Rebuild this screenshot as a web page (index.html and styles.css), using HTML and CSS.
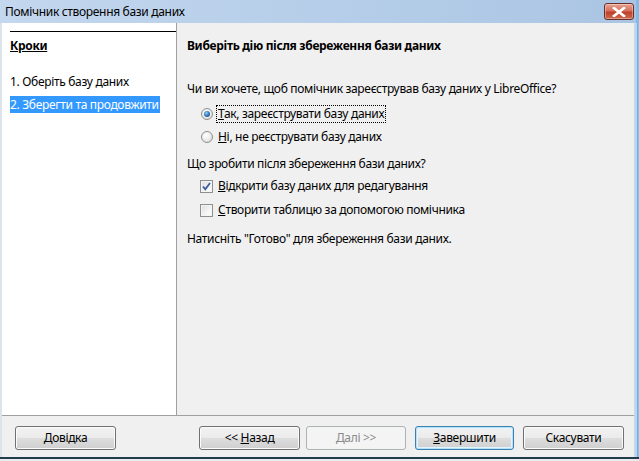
FILE: index.html
```html
<!DOCTYPE html>
<html lang="uk">
<head>
<meta charset="utf-8">
<title>Помічник створення бази даних</title>
<link rel="stylesheet" href="styles.css">
</head>
<body>
<div class="window">
  <div class="titlebar">
    <span class="title">Помічник створення бази даних</span>
    <div class="close">
      <svg width="14" height="10" viewBox="0 0 14 10"><path d="M2 1 L12 9 M12 1 L2 9" stroke="#ffffff" stroke-width="2.6" stroke-linecap="square"/></svg>
    </div>
  </div>
  <div class="frame">
    <div class="client">
      <div class="main">
        <aside class="steps">
          <div class="rule"></div>
          <div class="steps-title">Кроки</div>
          <ul class="step-list">
            <li class="step">1. Оберіть базу даних</li>
            <li class="step current">2. Зберегти та продовжити</li>
          </ul>
        </aside>
        <section class="page">
          <h1 class="page-title">Виберіть дію після збереження бази даних</h1>
          <p class="question q1">Чи ви хочете, щоб помічник зареєстрував базу даних у LibreOffice?</p>
          <div class="option r1"><span class="radio checked"></span><span class="label focus"><u>Т</u>ак, зареєструвати базу даних</span></div>
          <div class="option r2"><span class="radio"></span><span class="label"><u>Н</u>і, не реєструвати базу даних</span></div>
          <p class="question q2">Що зробити після збереження бази даних?</p>
          <div class="option c1"><span class="check checked"><svg width="11" height="11" viewBox="0 0 11 11"><path d="M2 5.5 L4.3 8.3 L9 2" fill="none" stroke="#3b5c9a" stroke-width="1.8"/></svg></span><span class="label"><u>В</u>ідкрити базу даних для редагування</span></div>
          <div class="option c2"><span class="check"></span><span class="label"><u>С</u>творити таблицю за допомогою помічника</span></div>
          <p class="question note">Натисніть "Готово" для збереження бази даних.</p>
        </section>
      </div>
      <div class="footer">
        <button class="btn help"><u>Д</u>овідка</button>
        <div class="nav">
          <button class="btn back">&lt;&lt; <u>Н</u>азад</button>
          <button class="btn next" disabled><u>Д</u>алі &gt;&gt;</button>
          <button class="btn finish default"><u>З</u>авершити</button>
          <button class="btn cancel">Скасувати</button>
        </div>
      </div>
    </div>
    <div class="edge"></div>
  </div>
  <div class="bottom"></div>
</div>
</body>
</html>
```
FILE: styles.css
```css
* { box-sizing: border-box; }
html, body { margin: 0; padding: 0; }
body {
  width: 639px;
  height: 461px;
  overflow: hidden;
  font-family: "Noto Sans", "Open Sans", sans-serif;
  font-size: 12px;
  line-height: 16px;
  letter-spacing: -0.32px;
  color: #000;
  background: #e9edf1;
}
.window {
  width: 639px;
  height: 461px;
  display: flex;
  flex-direction: column;
}
.titlebar {
  height: 23px;
  flex: none;
  display: flex;
  align-items: flex-start;
  justify-content: space-between;
  background: linear-gradient(90deg, #c3d7ee 0%, #b6cee9 50%, #aac5e3 100%);
  border-right: 3px solid #7fbce6;
  padding-left: 5px;
}
.title {
  margin-top: 4px;
  font-size: 12px;
  color: #000;
}
.close {
  margin-top: 3px;
  margin-right: 2px;
  width: 30px;
  height: 17px;
  border: 1px solid #6b2f2a;
  border-radius: 3px;
  background: linear-gradient(#e8a594 0%, #d5705b 45%, #c0402a 55%, #d06a4f 100%);
  box-shadow: inset 0 0 0 1px rgba(255,255,255,0.35);
  display: flex;
  align-items: center;
  justify-content: center;
}
.frame {
  flex: 1;
  display: flex;
}
.client {
  flex: 1;
  display: flex;
  flex-direction: column;
  border-left: 2px solid #dde3ea;
}
.edge {
  width: 5px;
  background: linear-gradient(90deg, #c9d9ea 0%, #bdd3ea 55%, #5fb0e4 60%, #8cc8ee 100%);
}
.main {
  height: 393px;
  display: flex;
  border-bottom: 1px solid #a0a0a0;
}
.steps {
  width: 175px;
  background: #fff;
  border-right: 1px solid #a0a0a0;
  padding: 8px 0 0 8px;
}
.rule {
  height: 1px;
  background: #000;
}
.steps-title {
  margin-top: 6px;
  font-weight: bold;
  text-decoration: underline;
}
.step-list {
  list-style: none;
  margin: 19px 0 0;
  padding: 0;
}
.step {
  display: table;
  padding: 1px 1px 0 0;
  height: 17px;
  margin-bottom: 6px;
}
.step.current {
  background: #3399ff;
  color: #fff;
}
.page {
  flex: 1;
  background: #f0f0f0;
  padding: 15px 0 0 10px;
}
.page-title {
  margin: 0;
  font-size: 12px;
  line-height: 16px;
  font-weight: bold;
}
.question { margin: 0; }
.q1 { margin-top: 27px; }
.option {
  display: flex;
  align-items: center;
  padding-left: 14px;
  height: 16px;
}
.r1 { margin-top: 9px; }
.r2 { margin-top: 7px; }
.q2 { margin-top: 11px; }
.c1 { margin-top: 6px; }
.c2 { margin-top: 8px; }
.note { margin-top: 13px; }
.label { margin-left: 5px; }
.label.focus {
  outline: 1px dotted #000;
  outline-offset: 0;
  padding: 0 1px;
  margin-left: 4px;
}
.radio {
  width: 12px;
  height: 12px;
  border-radius: 50%;
  border: 1px solid #8e8f8f;
  background: radial-gradient(circle at 40% 35%, #ffffff 0%, #eaeaea 55%, #d2d2d2 100%);
  display: flex;
  align-items: center;
  justify-content: center;
  flex: none;
}
.radio.checked::after {
  content: "";
  width: 6px;
  height: 6px;
  border-radius: 50%;
  background: radial-gradient(circle at 40% 35%, #8fd0f5 0%, #2a6fb5 55%, #163e6a 100%);
}
.check {
  width: 13px;
  height: 13px;
  border: 1px solid #8e8f8f;
  background: linear-gradient(135deg, #dcdcdc 0%, #f5f5f5 60%, #ffffff 100%);
  box-shadow: inset 0 0 0 1px #f4f4f4;
  display: flex;
  align-items: center;
  justify-content: center;
  flex: none;
  margin-left: -1px;
}
.footer {
  flex: 1;
  display: flex;
  justify-content: space-between;
  align-items: flex-start;
  padding: 10px 10px 0 13px;
  background: #f0f0f0;
}
.nav { display: flex; }
.btn {
  font-family: inherit;
  font-size: 12px;
  line-height: 16px;
  letter-spacing: -0.32px;
  height: 24px;
  width: 101px;
  padding: 0;
  color: #000;
  border: 1px solid #707070;
  border-radius: 3px;
  background: linear-gradient(#f2f2f2 0%, #ebebeb 48%, #dddddd 52%, #cfcfcf 100%);
  box-shadow: inset 0 0 0 1px #fbfbfb;
}
.btn u { text-decoration: underline; }
.next {
  width: 100px;
  margin-left: 6px;
  color: #8a8a8a;
  border-color: #adb2b5;
  background: #f4f4f4;
  box-shadow: none;
}
.finish {
  width: 99px;
  margin-left: 9px;
  border-color: #3c7fb1;
  box-shadow: inset 0 0 0 1px #b6e3f8, inset 0 0 0 2px #e4f4fc;
}
.cancel { margin-left: 9px; }
.bottom {
  height: 4px;
  flex: none;
  background: linear-gradient(#233c4c 0%, #233c4c 50%, #e8ecef 50%);
}
```
